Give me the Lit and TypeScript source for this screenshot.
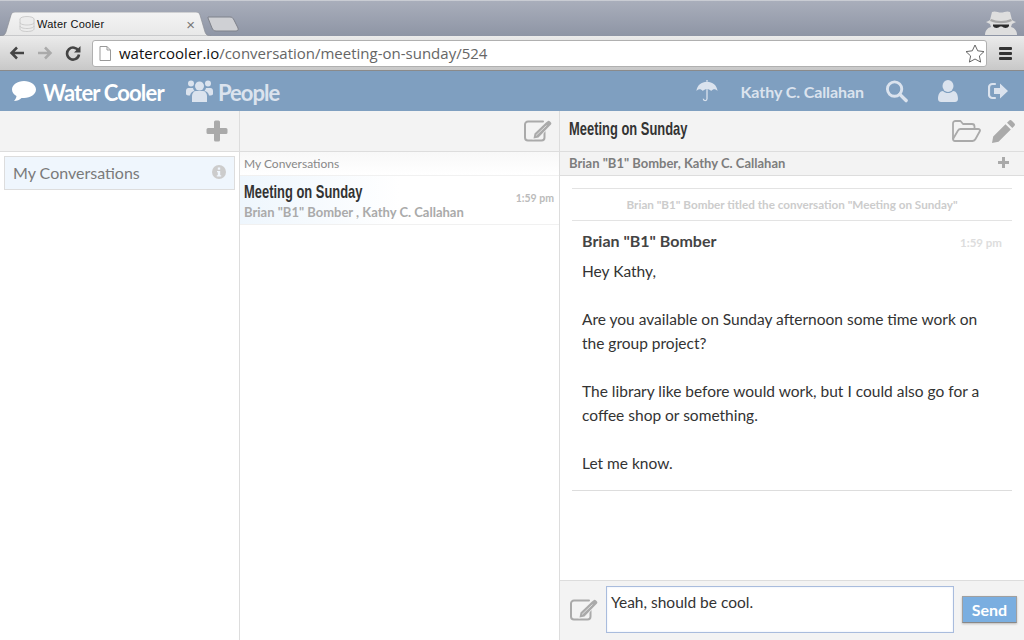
import { LitElement, css, html } from "lit";
import { customElement } from "lit/decorators.js";

const compose = () => html`
  <svg width="28" height="22" viewBox="0 0 28 22" fill="none">
    <path d="M20.500 11v6.500a3 3 0 0 1-3 3H4a3 3 0 0 1-3-3V4.500a3 3 0 0 1 3-3h15" stroke="#aaa" stroke-width="2" stroke-linecap="round"/>
    <path d="M9.500 18.500 L10.500 13.500 L22 2.500 L24 1 Q25 .5 26 1.500 L27 2.500 Q27.800 3.500 27 4.500 L25.500 6 L14.500 17.500 Z" fill="#aaa" stroke="#f3f3f3" stroke-width="1.500" paint-order="stroke"/>
    <path d="M12 15.500 L22.500 5.500" stroke="#f3f3f3" stroke-width="0.700"/>
  </svg>`;

@customElement("app-root")
export class AppRoot extends LitElement {
  static styles = css`
    :host {
      display: flex;
      flex-direction: column;
      width: 1024px;
      height: 640px;
      overflow: hidden;
      background: #fff;
      font-family: Lato, "Liberation Sans", sans-serif;
      color: #333;
    }

    /* browser chrome */
    .strip {
      height: 36px;
      flex: none;
      display: flex;
      align-items: flex-end;
      padding: 0 7px;
      background: linear-gradient(#a9aebb, #8e95a5);
      border-top: 1px solid #c9ccd3;
      box-sizing: border-box;
    }
    .tab {
      position: relative;
      width: 206px;
      height: 24px;
      display: flex;
      align-items: center;
      box-sizing: border-box;
      padding: 0 18px 0 12px;
      font: 11px "Liberation Sans", sans-serif;
      color: #111;
    }
    .tab-shape {
      position: absolute;
      left: -7px;
      top: 0;
    }
    .tab > *:not(.tab-shape) {
      position: relative;
    }
    .tab-title {
      margin-left: 2px;
      flex: 1;
      letter-spacing: 0.25px;
    }
    .tab-x {
      color: #777;
      font-size: 15px;
    }
    .new-tab {
      margin: 0 0 4px -6px;
    }
    .spy {
      margin-left: auto;
      margin-bottom: 1px;
    }
    .toolbar {
      height: 35px;
      flex: none;
      display: flex;
      align-items: center;
      box-sizing: border-box;
      background: linear-gradient(#ebebeb, #c8c8c8);
      border-bottom: 1px solid #8a8a8a;
      padding: 0 0 0 9px;
    }
    .nav {
      display: flex;
      gap: 12px;
      width: 83px;
      flex: none;
      align-items: center;
    }
    .omni {
      width: 895px;
      height: 27px;
      flex: none;
      box-sizing: border-box;
      background: #fff;
      border: 1px solid #b0b0b0;
      border-radius: 3px;
      display: flex;
      align-items: center;
      padding: 0 1px 0 6px;
      font: 15px "Open Sans", "DejaVu Sans", sans-serif;
      color: #666;
    }
    .omni b {
      font-weight: 400;
      color: #111;
    }
    .omni .url {
      margin-left: 8px;
      flex: 1;
    }
    .menu {
      margin-left: 12px;
      width: 13px;
      display: grid;
      gap: 2px;
    }
    .menu i {
      height: 3px;
      background: #333;
      border-radius: 1px;
    }

    /* app bar */
    .bar {
      height: 40px;
      flex: none;
      display: flex;
      align-items: center;
      background: #7f9fc0;
      padding: 0 16px 0 12px;
      box-sizing: border-box;
      font-weight: 700;
      color: #dbe3ee;
    }
    .brand,
    .people {
      display: flex;
      align-items: center;
      font-size: 22px;
    }
    .brand {
      color: #fff;
      letter-spacing: -0.83px;
      gap: 7px;
      width: 174px;
    }
    .people {
      letter-spacing: -1px;
      gap: 5px;
    }
    .brand span,
    .people span {
      padding-top: 2px;
    }
    .bar-right {
      margin-left: auto;
      display: flex;
      align-items: center;
    }
    .who {
      font-size: 16px;
      letter-spacing: -0.08px;
      margin: 0 21px 0 23px;
    }
    .bar-gap {
      margin-left: 30px;
    }

    /* columns */
    .cols {
      flex: 1;
      min-height: 0;
      display: grid;
      grid-template-columns: 240px 320px 464px;
    }
    .col {
      display: flex;
      flex-direction: column;
      min-width: 0;
      border-right: 1px solid #ddd;
      box-sizing: border-box;
    }
    .col:last-child {
      border-right: 0;
    }
    .head {
      height: 41px;
      flex: none;
      box-sizing: border-box;
      background: #f3f3f3;
      border-bottom: 1px solid #ddd;
      display: flex;
      align-items: center;
      justify-content: flex-end;
    }
    .head.left {
      padding-right: 11px;
    }
    .head.mid {
      padding-right: 7px;
    }
    .sidebar-item {
      margin: 4px 4px 0 4px;
      height: 34px;
      box-sizing: border-box;
      background: #eff6fd;
      border: 1px solid #ddd;
      display: flex;
      align-items: center;
      justify-content: space-between;
      padding: 0 8px 2px;
      font-size: 16px;
      color: #7a7a7a;
    }
    .crumb {
      height: 24px;
      flex: none;
      box-sizing: border-box;
      display: flex;
      align-items: center;
      padding-left: 4px;
      font-size: 12px;
      color: #888;
      border-bottom: 1px solid #f1f1f1;
      background: linear-gradient(#f8f8f8, #fff);
    }
    .conv {
      height: 49px;
      flex: none;
      box-sizing: border-box;
      display: flex;
      justify-content: space-between;
      padding: 4px 5px 0 4px;
      background: linear-gradient(90deg, #eef6fd, #fff 50%);
      border-bottom: 1px solid #f1f1f1;
    }
    /* no condensed family is installed, so the title is squeezed */
    .conv-title,
    .thread-title {
      display: block;
      width: 174px;
      font-family: "Liberation Sans", sans-serif;
      font-weight: 700;
      font-size: 19px;
      line-height: 24px;
      color: #333;
      white-space: nowrap;
      transform: scaleX(0.68);
      transform-origin: left center;
    }
    .thread-title {
      margin-bottom: 4px;
    }
    .conv-names {
      font-size: 13px;
      font-weight: 700;
      color: #aaa;
      line-height: 16px;
    }
    .time {
      font-size: 10.5px;
      font-weight: 700;
      color: #bbb;
      margin-top: 12px;
    }
    .head.right {
      justify-content: space-between;
      padding: 0 9px;
    }
    .tools {
      display: flex;
      align-items: center;
      gap: 11px;
    }
    .members {
      height: 24px;
      flex: none;
      box-sizing: border-box;
      display: flex;
      align-items: center;
      justify-content: space-between;
      padding: 0 15px 2px 9px;
      background: #f3f3f3;
      border-bottom: 1px solid #ddd;
      font-size: 13px;
      font-weight: 700;
      color: #7d7d7d;
    }
    .thread {
      flex: 1;
      min-height: 0;
      padding: 12px 12px 0 12px;
    }
    .notice {
      height: 33px;
      box-sizing: border-box;
      border-top: 1px solid #e3e3e3;
      border-bottom: 1px solid #e3e3e3;
      display: flex;
      align-items: center;
      justify-content: center;
      padding-bottom: 2px;
      font-size: 11.7px;
      font-weight: 700;
      color: #ccc;
    }
    .msg {
      border-bottom: 1px solid #ddd;
      padding: 9px 10px 15px 10px;
    }
    .msg-head {
      height: 22px;
      display: flex;
      justify-content: space-between;
      align-items: center;
      font-size: 16px;
      font-weight: 700;
      color: #444;
      line-height: 22px;
    }
    .msg-head .time {
      margin: 4px 0 0;
      font-size: 11.5px;
      color: #ddd;
    }
    .msg p {
      margin: 0;
      font-size: 15.5px;
      line-height: 24px;
      color: #333;
      min-height: 24px;
    }
    .msg-body {
      margin-top: 7px;
    }
    .composer {
      height: 60px;
      flex: none;
      box-sizing: border-box;
      background: #f3f3f3;
      border-top: 1px solid #ddd;
      display: flex;
      align-items: flex-start;
      padding: 5px 7px 0 10px;
    }
    .composer svg {
      margin: 13px 8px 0 0;
      flex: none;
    }
    .reply {
      width: 348px;
      height: 47px;
      flex: none;
      box-sizing: border-box;
      background: #fff;
      border: 1px solid #a9bcdd;
      box-shadow: inset 0 0 2px #dde6f5;
      padding: 5px 4px;
      font-size: 15.5px;
      line-height: 20px;
      color: #333;
    }
    .send {
      margin: 10px 0 0 8px;
      width: 55px;
      height: 27px;
      box-sizing: border-box;
      background: #7aaee0;
      border: 1px solid #a0a0a0;
      border-bottom-color: #888;
      box-shadow: 0 1px 2px #bbb;
      color: #fff;
      font-size: 16px;
      font-weight: 700;
      display: flex;
      align-items: center;
      justify-content: center;
    }
  `;

  render() {
    return html`
      <div class="strip">
        <div class="tab">
          <svg class="tab-shape" width="216" height="24" viewBox="0 0 216 24">
            <defs>
              <linearGradient id="t" x1="0" y1="0" x2="0" y2="1">
                <stop offset="0" stop-color="#f4f4f4" />
                <stop offset="1" stop-color="#e8e8e8" />
              </linearGradient>
            </defs>
            <path d="M0 24c3 0 5-1 6-4L11 3c.5-2 2-3 4-3h181c2 0 3.500 1 4 3l5 17c1 3 3 4 6 4z" fill="url(#t)" stroke="#8d8f96" stroke-width="0.700" />
          </svg>
          <svg width="16" height="16" viewBox="0 0 16 16" fill="#ececec" stroke="#c4c4c4" stroke-width="0.800">
            <ellipse cx="8" cy="3" rx="7" ry="2.500" />
            <path d="M1 3v10c0 1.500 3 2.500 7 2.500s7-1 7-2.500V3M1 6.500c0 1.500 3 2.500 7 2.500s7-1 7-2.500M1 10c0 1.500 3 2.500 7 2.500s7-1 7-2.500" />
          </svg>
          <span class="tab-title">Water Cooler</span>
          <span class="tab-x">×</span>
        </div>
        <svg class="new-tab" width="33" height="16" viewBox="0 0 33 16">
          <path d="M1 1h22c2 0 3 1 4 3l4 8c.6 2-.4 3-2 3H9c-2 0-3-1-4-3L1 2z" fill="#cfd0d4" stroke="#7f828b" />
        </svg>
        <svg class="spy" width="32" height="26" viewBox="0 0 32 26">
          <path d="M0 26c0-4 2-7 6-8l-1-3-4-2c2-1 3-1 4-2l2-8c3-1.500 6 .5 9 .5s6-2 9-.5l2 8c1 1 2 1 4 2l-4 2-1 3c4 1 6 4 6 8z" fill="#dedede" />
          <path d="M6 10c6 2.500 14 2.500 20 0l1 2c-7 3-15 3-22 0z" fill="#a8a8a8" />
          <path d="M8 15.500h16v1.500c-1 2.500-5.500 2.500-7 .5h-2c-1.500 2-6 2-7-.5z" fill="#2a2a2a" />
        </svg>
      </div>
      <div class="toolbar">
        <div class="nav">
          <svg width="16" height="14" viewBox="0 0 16 14" fill="none" stroke="#444" stroke-width="2.500"><path d="M15 7H3M8 1.500 2.500 7 8 12.500" /></svg>
          <svg width="16" height="14" viewBox="0 0 16 14" fill="none" stroke="#aaa" stroke-width="2.500"><path d="M1 7h12M8 1.500 13.500 7 8 12.500" /></svg>
          <svg width="16" height="16" viewBox="0 0 16 16" fill="none" stroke="#444" stroke-width="2.600"><path d="M13.500 6A6 6 0 1 0 14 9.500" /><path d="M15.500 1v6.500H9z" fill="#444" stroke="none" /></svg>
        </div>
        <div class="omni">
          <svg width="12" height="15" viewBox="0 0 12 15" fill="#fff" stroke="#999"><path d="M1 .5h7l3.500 3.500v10.500H1zM8 .5V4h3.500" /></svg>
          <span class="url"><b>watercooler.io</b>/conversation/meeting-on-sunday/524</span>
          <svg width="20" height="19" viewBox="0 0 20 19" fill="#fff" stroke="#666"><path d="M10 1l2.700 5.800 6.300.8-4.600 4.300 1.200 6.200L10 15l-5.600 3.100 1.200-6.200L1 7.600l6.300-.8z" /></svg>
        </div>
        <div class="menu"><i></i><i></i><i></i></div>
      </div>
      <div class="bar">
        <div class="brand">
          <svg width="24" height="22" viewBox="0 0 24 22" fill="#fff"><path d="M12 1C5.400 1 0 4.800 0 9.500c0 2.700 1.800 5 4.500 6.500-.2 1.800-1 3.500-2.500 5 3 0 5.700-1.300 7.500-3.100.8.100 1.700.1 2.500.1 6.600 0 12-3.800 12-8.500S18.600 1 12 1z" /></svg>
          <span>Water Cooler</span>
        </div>
        <div class="people">
          <svg width="27" height="24" viewBox="0 0 27 24" fill="#dbe3ee">
            <circle cx="13.500" cy="7" r="4.500" /><circle cx="5" cy="4.500" r="3" /><circle cx="22" cy="4.500" r="3" />
            <path d="M6 23v-6c0-3 2-5 4-5h7c2 0 4 2 4 5v6zM0 15v-3c0-2 1-3 2.500-3H7a6 6 0 0 0 1.500 3C6 12.500 4.500 14 4 16.500 2 16.500 0 16 0 15zM27 15v-3c0-2-1-3-2.500-3H20a6 6 0 0 1-1.500 3c2.500.5 4 2 4.500 4.500 2 0 4-.5 4-1.500z" />
          </svg>
          <span>People</span>
        </div>
        <div class="bar-right">
          <svg width="22" height="24" viewBox="0 0 24 24" fill="#dbe3ee">
            <path d="M12 2C6 2 1 6 .5 12c1-1.500 2.500-2 3.500-2s2.500.5 3.500 2c.8-1.500 2.500-2 4.500-2s3.700.5 4.500 2c1-1.500 2.500-2 3.500-2s2.500.5 3.500 2C23 6 18 2 12 2z" />
            <path d="M12 0v2M12 10v10.500a2 2 0 0 1-4 0" fill="none" stroke="#dbe3ee" stroke-width="1.400" />
          </svg>
          <span class="who">Kathy C. Callahan</span>
          <svg width="23" height="24" viewBox="0 0 24 24" fill="none" stroke="#dbe3ee"><circle cx="10" cy="10" r="7.500" stroke-width="3" /><path d="M15.500 15.500 22 22" stroke-width="3.600" stroke-linecap="round" /></svg>
          <svg class="bar-gap" width="20" height="22" viewBox="0 0 20 22" fill="#dbe3ee"><ellipse cx="10" cy="6" rx="5.500" ry="6" /><path d="M0 19c0-5 2-8 5-8 1.500 1.500 3 2 5 2s3.500-.5 5-2c3 0 5 3 5 8 0 2-1.500 3-3 3H3c-1.500 0-3-1-3-3z" /></svg>
          <svg class="bar-gap" width="20" height="18" viewBox="0 0 20 18" fill="#dbe3ee">
            <path d="M7 2H4.500A3.500 3.500 0 0 0 1 5.500v7A3.500 3.500 0 0 0 4.500 16H7" fill="none" stroke="#dbe3ee" stroke-width="2.200" stroke-linecap="round" />
            <path d="M6 6h6V1.500L20 9l-8 7.500V12H6z" />
          </svg>
        </div>
      </div>
      <div class="cols">
        <div class="col">
          <div class="head left">
            <svg width="22" height="22" viewBox="0 0 22 22" fill="#aaa"><path d="M8 2a1.500 1.500 0 0 1 1.500-1.500h3A1.500 1.500 0 0 1 14 2v6h6a1.500 1.500 0 0 1 1.500 1.500v3A1.500 1.500 0 0 1 20 14h-6v6a1.500 1.500 0 0 1-1.500 1.500h-3A1.500 1.500 0 0 1 8 20v-6H2A1.500 1.500 0 0 1 .5 12.500v-3A1.500 1.500 0 0 1 2 8h6z" /></svg>
          </div>
          <div class="sidebar-item">
            <span>My Conversations</span>
            <svg width="14" height="14" viewBox="0 0 14 14"><circle cx="7" cy="7" r="7" fill="#ccc" /><rect x="5.800" y="2.500" width="2.400" height="2.200" fill="#eff6fd" /><path d="M5 6h3.200v4.300H9.200v1.200H4.800v-1.200h1V7.200H5z" fill="#eff6fd" /></svg>
          </div>
        </div>
        <div class="col">
          <div class="head mid">${compose()}</div>
          <div class="crumb">My Conversations</div>
          <div class="conv">
            <div>
              <div class="conv-title">Meeting on Sunday</div>
              <div class="conv-names">Brian "B1" Bomber , Kathy C. Callahan</div>
            </div>
            <div class="time">1:59 pm</div>
          </div>
        </div>
        <div class="col">
          <div class="head right">
            <span class="thread-title">Meeting on Sunday</span>
            <div class="tools">
              <svg width="29" height="22" viewBox="0 0 29 22" fill="none" stroke="#aaa" stroke-width="1.800" stroke-linejoin="round">
                <path d="M1 19V3.500A2.500 2.500 0 0 1 3.500 1h5l2.500 3h9a2.500 2.500 0 0 1 2.500 2.500V9" />
                <path d="M1 19l5-8.500A3 3 0 0 1 8.500 9H26c1.500 0 2.500 1 1.800 2.200L23.500 19a3.500 3.500 0 0 1-3 2H3c-1.500 0-2-1-2-2z" />
              </svg>
              <svg width="23" height="23" viewBox="0 0 23 23" fill="#aaa"><path d="M17 .7a2 2 0 0 1 2.800 0l2.500 2.500a2 2 0 0 1 0 2.800l-2 2-5.300-5.300zM13.500 4.200l5.300 5.300L6.500 21.800 0 23l1.200-6.500z" /></svg>
            </div>
          </div>
          <div class="members">
            <span>Brian "B1" Bomber, Kathy C. Callahan</span>
            <svg width="11" height="11" viewBox="0 0 11 11" fill="#aaa"><path d="M4 0h3v4h4v3H7v4H4V7H0V4h4z" /></svg>
          </div>
          <div class="thread">
            <div class="notice">Brian "B1" Bomber titled the conversation "Meeting on Sunday"</div>
            <div class="msg">
              <div class="msg-head"><span>Brian "B1" Bomber</span><span class="time">1:59 pm</span></div>
              <div class="msg-body">
                <p>Hey Kathy,</p>
                <p></p>
                <p>Are you available on Sunday afternoon some time work on the group project?</p>
                <p></p>
                <p>The library like before would work, but I could also go for a coffee shop or something.</p>
                <p></p>
                <p>Let me know.</p>
              </div>
            </div>
          </div>
          <div class="composer">
            ${compose()}
            <div class="reply">Yeah, should be cool.</div>
            <div class="send">Send</div>
          </div>
        </div>
      </div>
    `;
  }
}
